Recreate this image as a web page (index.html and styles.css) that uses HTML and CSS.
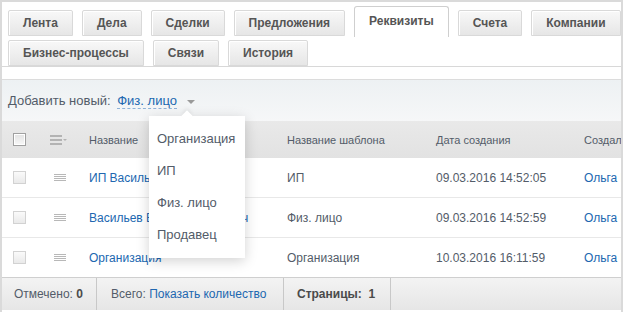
FILE: index.html
```html
<!DOCTYPE html>
<html lang="ru">
<head>
<meta charset="UTF-8">
<title>Реквизиты</title>
<link rel="stylesheet" href="styles.css">
</head>
<body>

<div class="window">
  <div class="tabs">
    <div class="tab-row">
      <div class="tab">Лента</div>
      <div class="tab">Дела</div>
      <div class="tab">Сделки</div>
      <div class="tab">Предложения</div>
      <div class="tab active">Реквизиты</div>
      <div class="tab">Счета</div>
      <div class="tab">Компании</div>
    </div>
    <div class="tab-row">
      <div class="tab">Бизнес-процессы</div>
      <div class="tab">Связи</div>
      <div class="tab">История</div>
    </div>
  </div>

  <div class="toolbar">
    Добавить новый:
    <span class="add-link">Физ. лицо</span>
    <span class="caret"></span>
  </div>

  <table class="grid">
    <colgroup>
      <col class="c-check"><col class="c-menu"><col class="c-name"><col class="c-tpl"><col class="c-date"><col class="c-author">
    </colgroup>
    <thead>
      <tr>
        <th><span class="check dark"></span></th>
        <th>
          <svg class="menu-head" width="18" height="10" viewBox="0 0 18 10">
            <rect x="0" y="0" width="12" height="2" fill="#b3b3b3"/>
            <rect x="0" y="4" width="12" height="2" fill="#b3b3b3"/>
            <rect x="0" y="8" width="12" height="2" fill="#b3b3b3"/>
            <path d="M13 4h4l-2 2z" fill="#b3b3b3"/>
          </svg>
        </th>
        <th>Название</th>
        <th>Название шаблона</th>
        <th>Дата создания</th>
        <th>Создал</th>
      </tr>
    </thead>
    <tbody>
      <tr>
        <td><span class="check"></span></td>
        <td><span class="row-menu"></span></td>
        <td><a href="#">ИП Васильев В.И.</a></td>
        <td>ИП</td>
        <td>09.03.2016 14:52:05</td>
        <td><a href="#">Ольга Иванова</a></td>
      </tr>
      <tr>
        <td><span class="check"></span></td>
        <td><span class="row-menu"></span></td>
        <td><a href="#">Васильев Василий Юрьевич</a></td>
        <td>Физ. лицо</td>
        <td>09.03.2016 14:52:59</td>
        <td><a href="#">Ольга Иванова</a></td>
      </tr>
      <tr>
        <td><span class="check"></span></td>
        <td><span class="row-menu"></span></td>
        <td><a href="#">Организация</a></td>
        <td>Организация</td>
        <td>10.03.2016 16:11:59</td>
        <td><a href="#">Ольга Иванова</a></td>
      </tr>
    </tbody>
  </table>

  <div class="footer">
    <div class="f-cell f-checked">Отмечено: <b>0</b></div>
    <div class="f-cell f-total">Всего: <a href="#">Показать количество</a></div>
    <div class="f-cell f-pages"><b>Страницы:&nbsp; 1</b></div>
  </div>

  <!-- popup for "Добавить новый" -->
  <div class="popup">
    <div class="popup-item">Организация</div>
    <div class="popup-item">ИП</div>
    <div class="popup-item">Физ. лицо</div>
    <div class="popup-item">Продавец</div>
  </div>
</div>

</body>
</html>
```

FILE: styles.css
```css
body { margin: 0; font-family: "Liberation Sans", Arial, sans-serif; color: #535c69; background: #fff; }
.window { position: relative; width: 619px; height: 310px; border: 2px solid #dadada; border-bottom: none; overflow: hidden; }

.tabs { padding: 8px 6px 0; height: 56px; border-bottom: 1px solid #d8d8d8; }
.tab-row { display: flex; align-items: flex-start; gap: 9px; height: 26px; margin-bottom: 4px; }
.tab-row:last-child { margin-bottom: 0; }
.tab {
  height: 24px; line-height: 24px; padding: 0 14px;
  border: 1px solid #d9d9d9; border-radius: 2px 2px 0 0;
  background: linear-gradient(#f8f8f8, #e6e6e6);
  box-shadow: inset 1px 1px 0 #fff;
  font-size: 12px; font-weight: bold; color: #555;
}
.tab.active {
  margin-top: -4px; height: 30px; line-height: 28px; padding: 0 14px;
  background: #fff; border-color: #cfcfcf; border-bottom: none; box-shadow: none;
  border-radius: 3px 3px 0 0;
}

.toolbar {
  margin-top: 12px; height: 41px; line-height: 41px; padding-left: 6px;
  border-top: 1px solid #dcdcdc;
  background: linear-gradient(#edf1f3, #f6f7f8);
  font-size: 13px; color: #535c69;
}
.add-link { color: #2067b0; border-bottom: 1px dashed #8fb2d8; line-height: 14px; display: inline-block; margin-left: 3px; }
.caret { display: inline-block; width: 0; height: 0; margin-left: 6px; vertical-align: middle;
  border-left: 4px solid transparent; border-right: 4px solid transparent; border-top: 4px solid #9a9a9a; }

.grid { width: 619px; border-collapse: collapse; table-layout: fixed; }
.c-check { width: 36px; }
.c-menu { width: 38px; }
.c-name { width: 198px; }
.c-tpl { width: 149px; }
.c-date { width: 148px; }
.c-author { width: 50px; }
.grid th {
  height: 37px; padding: 0 0 0 13px; text-align: left; white-space: nowrap; overflow: hidden;
  background: linear-gradient(#e9e9e9, #e2e2e2);
  font-size: 11px; font-weight: normal; color: #535c69;
}
.grid td {
  height: 39px; padding: 0 0 0 13px; white-space: nowrap; overflow: hidden;
  border-bottom: 1px solid #e8e8e8; font-size: 12px; color: #535c69;
}
.grid th:nth-child(1), .grid td:nth-child(1) { padding-left: 11px; }
.grid th:nth-child(2), .grid td:nth-child(2) { padding-left: 12px; }
.grid tbody tr:last-child td { border-bottom: none; }
a { color: #2067b0; text-decoration: none; }

.check { display: block; width: 11px; height: 11px; border: 1px solid #d2d2d2; background: linear-gradient(#fafafa, #eaeaea); }
.check.dark { border-color: #a0a0a0; box-shadow: inset 0 0 0 1px #fff; background: linear-gradient(#e2e2e2, #f8f8f8); }
.menu-head { display: block; }
.row-menu { display: block; margin-left: 4px; width: 12px; height: 8px;
  background: repeating-linear-gradient(#b8b8b8 0 1px, transparent 1px 2px); }

.footer {
  display: flex; height: 32px; line-height: 32px;
  border-top: 1px solid #cfcfcf;
  background: linear-gradient(#f3f3f3, #e6e6e6);
  font-size: 12px; color: #535c69;
}
.f-cell { border-right: 1px solid #c8c8c8; white-space: nowrap; }
.f-checked { width: 82px; padding-left: 12px; }
.f-total { width: 172px; padding-left: 14px; }
.f-pages { width: 93px; padding-left: 13px; }
.footer b { color: #4a4a4a; }

.popup {
  position: absolute; left: 147px; top: 114px; width: 96px; padding: 7px 0;
  background: #fff; box-shadow: 0 3px 12px rgba(0,0,0,0.18);
}
.popup::before {
  content: ""; position: absolute; left: 34px; top: -4px; width: 8px; height: 8px;
  background: #fff; transform: rotate(45deg); box-shadow: -2px -2px 4px rgba(0,0,0,0.06);
}
.popup-item { position: relative; height: 32px; line-height: 32px; padding-left: 8px; font-size: 13px; color: #535c69; }
```
